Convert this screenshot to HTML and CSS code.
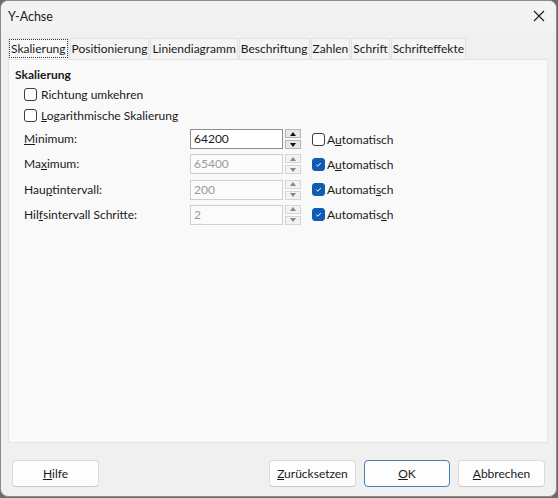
FILE: index.html
```html
<!DOCTYPE html>
<html>
<head>
<meta charset="utf-8">
<link rel="stylesheet" href="styles.css">
</head>
<body>
<div class="window">
  <div class="titlebar">
    <span class="title">Y-Achse</span>
    <svg class="close" width="12" height="12" viewBox="0 0 12 12"><path d="M1 1 L11 11 M11 1 L1 11" stroke="#1a1a1a" stroke-width="1.1" fill="none"/></svg>
  </div>
  <div class="content">
    <div class="tabs">
      <div class="tab active"><span class="focus">Skalierung</span></div>
      <div class="tab">Positionierung</div>
      <div class="tab">Liniendiagramm</div>
      <div class="tab">Beschriftung</div>
      <div class="tab">Zahlen</div>
      <div class="tab">Schrift</div>
      <div class="tab">Schrifteffekte</div>
    </div>
    <div class="panel">
      <div class="heading">Skalierung</div>
      <label class="check-row"><span class="cb"></span><span>Richtun<u>g</u> umkehren</span></label>
      <label class="check-row"><span class="cb"></span><span><u>L</u>ogarithmische Skalierung</span></label>
      <div class="form">
        <div class="lbl"><u>M</u>inimum:</div>
        <div class="spin"><div class="field">64200</div><div class="btns"><div class="sb up"></div><div class="sb down"></div></div></div>
        <label class="auto"><span class="cb"></span><span>A<u>u</u>tomatisch</span></label>

        <div class="lbl">Ma<u>x</u>imum:</div>
        <div class="spin disabled"><div class="field">65400</div><div class="btns"><div class="sb up"></div><div class="sb down"></div></div></div>
        <label class="auto"><span class="cb checked"><svg width="9" height="9" viewBox="0 0 9 9"><path d="M2.3 4.8 L3.8 6.2 L6.8 3" stroke="#fff" stroke-width="1" fill="none"/></svg></span><span>A<u>u</u>tomatisch</span></label>

        <div class="lbl">Hau<u>p</u>tintervall:</div>
        <div class="spin disabled"><div class="field">200</div><div class="btns"><div class="sb up"></div><div class="sb down"></div></div></div>
        <label class="auto"><span class="cb checked"><svg width="9" height="9" viewBox="0 0 9 9"><path d="M2.3 4.8 L3.8 6.2 L6.8 3" stroke="#fff" stroke-width="1" fill="none"/></svg></span><span>Automati<u>s</u>ch</span></label>

        <div class="lbl">Hil<u>f</u>sintervall Schritte:</div>
        <div class="spin disabled"><div class="field">2</div><div class="btns"><div class="sb up"></div><div class="sb down"></div></div></div>
        <label class="auto"><span class="cb checked"><svg width="9" height="9" viewBox="0 0 9 9"><path d="M2.3 4.8 L3.8 6.2 L6.8 3" stroke="#fff" stroke-width="1" fill="none"/></svg></span><span>Automatis<u>c</u>h</span></label>
      </div>
    </div>
    <div class="buttons">
      <button class="btn"><u>H</u>ilfe</button>
      <div class="spacer"></div>
      <button class="btn"><u>Z</u>urücksetzen</button>
      <button class="btn default"><u>O</u>K</button>
      <button class="btn"><u>A</u>bbrechen</button>
    </div>
  </div>
</div>
</body>
</html>
```
FILE: styles.css
```css
* { box-sizing: border-box; }
html, body { margin: 0; padding: 0; background: #6b6b6b; }
body {
  font-family: "Lato", "Noto Sans", sans-serif;
  font-size: 12px;
  color: #1a1a1a;
}
.window {
  width: 557px;
  height: 497px;
  background: #f0f0f0;
  border: 1px solid #8c8c8c;
  border-radius: 8px;
  overflow: hidden;
  display: flex;
  flex-direction: column;
}
.titlebar {
  height: 30px;
  background: #f3f3f3;
  display: flex;
  align-items: center;
  justify-content: space-between;
  padding: 0 11px 0 7px;
}
.title { font-size: 12.5px; }
.content {
  flex: 1;
  display: flex;
  flex-direction: column;
  padding: 7px 7px 9px 7px;
}
.tabs {
  display: flex;
  height: 21px;
  align-items: stretch;
}
.tab {
  padding: 0 1px;
  line-height: 19px;
  background: #f4f4f4;
  border: 1px solid #e2e2e2;
  border-bottom: none;
  margin-right: 1px;
  color: #1a1a1a;
  white-space: nowrap;
}
.tab.active {
  background: #f9f9f9;
  padding: 0;
}
.focus {
  display: inline-block;
  border: 1px dotted #333;
  line-height: 17px;
  padding: 0 1px;
}
.panel {
  flex: 1;
  background: #f9f9f9;
  border: 1px solid #e5e5e5;
  padding: 5px 6px 0 6px;
  display: flex;
  flex-direction: column;
  margin-right: 1px;
}
.heading {
  font-weight: bold;
  height: 19px;
  line-height: 19px;
}
.check-row {
  display: flex;
  align-items: center;
  gap: 4px;
  height: 21px;
  padding-left: 9px;
}
.cb {
  width: 13px;
  height: 13px;
  border: 1px solid #3c3c3c;
  border-radius: 3px;
  background: #fff;
  display: inline-flex;
  align-items: center;
  justify-content: center;
  flex-shrink: 0;
}
.cb.checked {
  background: #0f5cb4;
  border-color: #0f5cb4;
}
.form {
  margin-top: 3px;
  display: grid;
  grid-template-columns: 166px 112px auto;
  grid-auto-rows: 20px;
  row-gap: 5.3px;
  padding-left: 9px;
  align-items: center;
}
.lbl { line-height: 20px; }
.spin {
  display: flex;
  height: 20px;
  width: 111px;
}
.field {
  flex: 1;
  background: #fff;
  border: 1px solid #8e8e8e;
  padding-left: 3px;
  line-height: 18px;
}
.btns {
  width: 18px;
  display: flex;
  flex-direction: column;
  gap: 2px;
  padding-left: 2px;
}
.sb {
  flex: 1;
  background: #e8e8e8;
  border: 1px solid #b4b4b4;
  position: relative;
}
.sb::after {
  content: "";
  position: absolute;
  left: 50%;
  top: 50%;
  transform: translate(-50%, -50%);
  border-left: 3.5px solid transparent;
  border-right: 3.5px solid transparent;
}
.sb.up::after { border-bottom: 4px solid #111; }
.sb.down::after { border-top: 4px solid #111; }
.spin.disabled .field {
  color: #9a9a9a;
  background: #fbfbfb;
  border-color: #cfcfcf;
}
.spin.disabled .sb { background: #f2f2f2; border-color: #d6d6d6; }
.spin.disabled .sb.up::after { border-bottom-color: #888; }
.spin.disabled .sb.down::after { border-top-color: #888; }
.auto {
  display: flex;
  align-items: center;
  gap: 2px;
  padding-left: 10px;
}
.buttons {
  display: flex;
  gap: 8px;
  padding: 17px 4px 0 4px;
}
.spacer { flex: 1; }
.btn {
  font-family: inherit;
  font-size: 12px;
  color: #1a1a1a;
  width: 87px;
  height: 27px;
  background: #fdfdfd;
  border: 1px solid #dadada;
  border-bottom-color: #c8c8c8;
  border-radius: 4px;
  padding: 0;
}
.btn.default {
  border: 1px solid #3f7fc0;
  width: 86px;
}
```
